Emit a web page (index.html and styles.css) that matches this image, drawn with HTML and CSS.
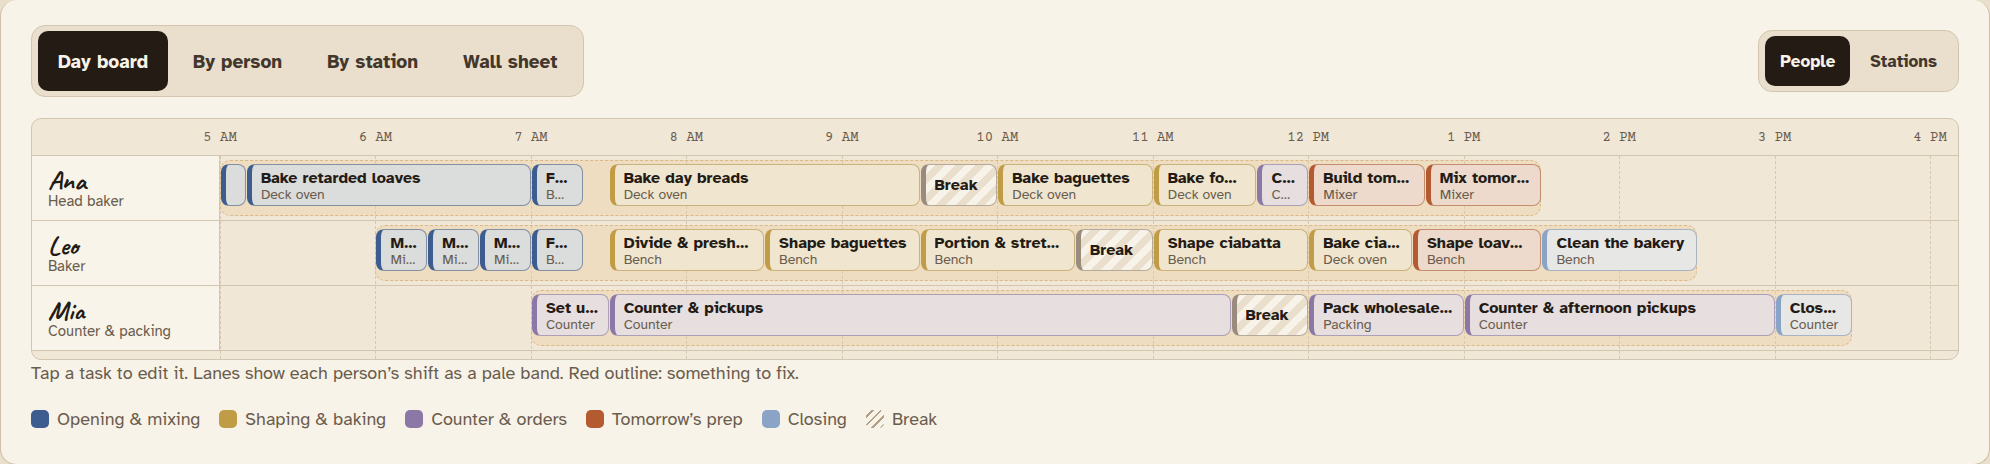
FILE: index.html
```
<!DOCTYPE html>
<html lang="en">
<head>
    <meta charset="UTF-8">
    <meta name="viewport" content="width=device-width, initial-scale=1.0">
    <title>Bakery Day Board</title>
    <link rel="stylesheet" href="styles.css">
</head>
<body>
    <main class="panel">
        <div class="toolbar">
            <div class="segmented views">
                <button class="seg active" type="button" aria-pressed="true">Day board</button>
                <button class="seg" type="button" aria-pressed="false">By person</button>
                <button class="seg" type="button" aria-pressed="false">By station</button>
                <button class="seg" type="button" aria-pressed="false">Wall sheet</button>
            </div>
            <div class="segmented grouping">
                <button class="seg active" type="button" aria-pressed="true">People</button>
                <button class="seg" type="button" aria-pressed="false">Stations</button>
            </div>
        </div>

        <div class="board">
            <div class="board-head">
                <div class="track">
                    <span class="hour" style="grid-column: 1">5 AM</span>
                    <span class="hour" style="grid-column: 13">6 AM</span>
                    <span class="hour" style="grid-column: 25">7 AM</span>
                    <span class="hour" style="grid-column: 37">8 AM</span>
                    <span class="hour" style="grid-column: 49">9 AM</span>
                    <span class="hour" style="grid-column: 61">10 AM</span>
                    <span class="hour" style="grid-column: 73">11 AM</span>
                    <span class="hour" style="grid-column: 85">12 PM</span>
                    <span class="hour" style="grid-column: 97">1 PM</span>
                    <span class="hour" style="grid-column: 109">2 PM</span>
                    <span class="hour" style="grid-column: 121">3 PM</span>
                    <span class="hour" style="grid-column: 133">4 PM</span>
                </div>
            </div>

            <div class="board-body">
                <div class="track gridlines">
                    <i style="grid-column: 1"></i>
                    <i style="grid-column: 13"></i>
                    <i style="grid-column: 25"></i>
                    <i style="grid-column: 37"></i>
                    <i style="grid-column: 49"></i>
                    <i style="grid-column: 61"></i>
                    <i style="grid-column: 73"></i>
                    <i style="grid-column: 85"></i>
                    <i style="grid-column: 97"></i>
                    <i style="grid-column: 109"></i>
                    <i style="grid-column: 121"></i>
                    <i style="grid-column: 133"></i>
                </div>

                <section class="row">
                    <div class="person">
                        <h2 class="name">Ana</h2>
                        <p class="role">Head baker</p>
                    </div>
                    <div class="track lane">
                        <div class="shift" style="grid-column: 1 / 103"></div>
                        <button class="task opening" type="button" style="grid-column: 1 / 3" aria-label="5:00 AM"></button>
                        <button class="task opening" type="button" style="grid-column: 3 / 25"><b>Bake retarded loaves</b><small>Deck oven</small></button>
                        <button class="task opening" type="button" style="grid-column: 25 / 29"><b>Feed starter</b><small>Bench</small></button>
                        <button class="task baking" type="button" style="grid-column: 31 / 55"><b>Bake day breads</b><small>Deck oven</small></button>
                        <button class="task break" type="button" style="grid-column: 55 / 61"><b>Break</b></button>
                        <button class="task baking" type="button" style="grid-column: 61 / 73"><b>Bake baguettes</b><small>Deck oven</small></button>
                        <button class="task baking" type="button" style="grid-column: 73 / 81"><b>Bake fo…</b><small>Deck oven</small></button>
                        <button class="task counter" type="button" style="grid-column: 81 / 85"><b>Check orders</b><small>Counter</small></button>
                        <button class="task prep" type="button" style="grid-column: 85 / 94"><b>Build tomorrow’s levain</b><small>Mixer</small></button>
                        <button class="task prep" type="button" style="grid-column: 94 / 103"><b>Mix tomorrow’s dough</b><small>Mixer</small></button>
                    </div>
                </section>

                <section class="row">
                    <div class="person">
                        <h2 class="name">Leo</h2>
                        <p class="role">Baker</p>
                    </div>
                    <div class="track lane">
                        <div class="shift" style="grid-column: 13 / 115"></div>
                        <button class="task opening" type="button" style="grid-column: 13 / 17"><b>Mix baguettes</b><small>Mixer</small></button>
                        <button class="task opening" type="button" style="grid-column: 17 / 21"><b>Mix focaccia</b><small>Mixer</small></button>
                        <button class="task opening" type="button" style="grid-column: 21 / 25"><b>Mix ciabatta</b><small>Mixer</small></button>
                        <button class="task opening" type="button" style="grid-column: 25 / 29"><b>Fold doughs</b><small>Bench</small></button>
                        <button class="task baking" type="button" style="grid-column: 31 / 43"><b>Divide &amp; preshape</b><small>Bench</small></button>
                        <button class="task baking" type="button" style="grid-column: 43 / 55"><b>Shape baguettes</b><small>Bench</small></button>
                        <button class="task baking" type="button" style="grid-column: 55 / 67"><b>Portion &amp; stretch focaccia</b><small>Bench</small></button>
                        <button class="task break" type="button" style="grid-column: 67 / 73"><b>Break</b></button>
                        <button class="task baking" type="button" style="grid-column: 73 / 85"><b>Shape ciabatta</b><small>Bench</small></button>
                        <button class="task baking" type="button" style="grid-column: 85 / 93"><b>Bake ciabatta</b><small>Deck oven</small></button>
                        <button class="task prep" type="button" style="grid-column: 93 / 103"><b>Shape loaves to retard</b><small>Bench</small></button>
                        <button class="task closing" type="button" style="grid-column: 103 / 115"><b>Clean the bakery</b><small>Bench</small></button>
                    </div>
                </section>

                <section class="row">
                    <div class="person">
                        <h2 class="name">Mia</h2>
                        <p class="role">Counter &amp; packing</p>
                    </div>
                    <div class="track lane">
                        <div class="shift" style="grid-column: 25 / 127"></div>
                        <button class="task counter" type="button" style="grid-column: 25 / 31"><b>Set up counter</b><small>Counter</small></button>
                        <button class="task counter" type="button" style="grid-column: 31 / 79"><b>Counter &amp; pickups</b><small>Counter</small></button>
                        <button class="task break" type="button" style="grid-column: 79 / 85"><b>Break</b></button>
                        <button class="task counter" type="button" style="grid-column: 85 / 97"><b>Pack wholesale orders</b><small>Packing</small></button>
                        <button class="task counter" type="button" style="grid-column: 97 / 121"><b>Counter &amp; afternoon pickups</b><small>Counter</small></button>
                        <button class="task closing" type="button" style="grid-column: 121 / 127"><b>Close counter</b><small>Counter</small></button>
                    </div>
                </section>
            </div>
        </div>

        <p class="hint">Tap a task to edit it. Lanes show each person’s shift as a pale band. Red outline: something to fix.</p>

        <ul class="legend">
            <li><span class="swatch opening"></span>Opening &amp; mixing</li>
            <li><span class="swatch baking"></span>Shaping &amp; baking</li>
            <li><span class="swatch counter"></span>Counter &amp; orders</li>
            <li><span class="swatch prep"></span>Tomorrow’s prep</li>
            <li><span class="swatch closing"></span>Closing</li>
            <li><span class="swatch break"></span>Break</li>
        </ul>
    </main>
</body>
</html>
```
FILE: styles.css
```
* {
    margin: 0;
    padding: 0;
    box-sizing: border-box;
}

:root {
    --ink: #241b15;
    --muted: #6b5d4e;
    --line: #d3c6b0;
    --paper: #f8f3e8;
    --sand: #e9dfcc;
}

body {
    font-family: "Atkinson Hyperlegible", "Noto Sans", sans-serif;
    font-size: 18px;
    line-height: 26px;
    color: var(--ink);
    background: #e9dfcc;
}

.panel {
    padding: 25px 30px 32px;
    background: var(--paper);
    border: 1px solid #cdbfa8;
    border-top: none;
    border-radius: 16px;
}

.toolbar {
    display: flex;
    justify-content: space-between;
    align-items: center;
    margin-bottom: 21px;
}

.segmented {
    display: flex;
    gap: 5px;
    padding: 5px 6px;
    background: var(--sand);
    border: 1px solid var(--line);
    border-radius: 14px;
}

.seg {
    border: none;
    border-radius: 10px;
    background: none;
    color: #43372c;
    font: inherit;
    font-weight: 700;
    cursor: pointer;
}

.seg.active {
    background: var(--ink);
    color: var(--paper);
}

.views .seg {
    height: 60px;
    padding: 2px 20px 0;
    font-size: 19px;
}

.grouping .seg {
    height: 50px;
    padding: 2px 15px 0;
    font-size: 17px;
}

.board {
    background: #f0e7d7;
    border: 1px solid var(--line);
    border-radius: 10px;
    overflow: hidden;
}

.board-head {
    padding-left: 188px;
    border-bottom: 1px solid var(--line);
}

/* one column per five minutes, 5:00 AM to 4:10 PM */
.track {
    display: grid;
    grid-template-columns: repeat(134, minmax(0, 1fr));
    grid-template-rows: 100%;
    padding-right: 2px;
}

.hour {
    grid-row: 1;
    display: flex;
    justify-content: center;
    width: 0;
    height: 36px;
    font-family: "Courier Prime", "Liberation Mono", monospace;
    font-size: 14px;
    line-height: 38px;
    color: var(--muted);
    white-space: nowrap;
}

.board-body {
    position: relative;
    padding-bottom: 8px;
}

.gridlines {
    position: absolute;
    inset: 0 0 0 188px;
}

.gridlines i {
    grid-row: 1;
    border-left: 1px dashed #d6c8b1;
}

.row {
    position: relative;
    display: grid;
    grid-template-columns: 188px 1fr;
    height: 65px;
    border-bottom: 1px solid var(--line);
}

.person {
    display: flex;
    flex-direction: column;
    justify-content: center;
    padding: 2px 0 0 16px;
    background: #f9f4e9;
    border-right: 1px solid var(--line);
}

.name {
    font-family: "Caveat", cursive;
    font-size: 27px;
    font-weight: 700;
    line-height: 24px;
}

.role {
    font-size: 15px;
    line-height: 18px;
    color: var(--muted);
}

.shift {
    grid-row: 1;
    margin: 4px 0;
    background: rgba(236, 202, 150, 0.35);
    border: 1px dashed #d9b98c;
    border-radius: 10px;
}

.task {
    grid-row: 1;
    display: flex;
    flex-direction: column;
    justify-content: center;
    min-width: 0;
    height: 42px;
    margin: 8px 0 0 1px;
    padding: 0 9px;
    border: 1px solid;
    border-left-width: 5px;
    border-radius: 8px;
    color: var(--ink);
    font: inherit;
    text-align: left;
    overflow: hidden;
    cursor: pointer;
}

.task b,
.task small {
    width: 100%;
    overflow: hidden;
    text-overflow: ellipsis;
    white-space: nowrap;
}

.task b {
    font-size: 16px;
    line-height: 18px;
}

.task small {
    padding-right: 1px;
    font-size: 14px;
    line-height: 15px;
    color: var(--muted);
}

.task.opening {
    background: #dbdcdc;
    border-color: #848fa1;
    border-left-color: #3d5c8f;
}

.task.baking {
    background: #f0e6d0;
    border-color: #c9b27c;
    border-left-color: #c19c47;
}

.task.counter {
    background: #e6dedf;
    border-color: #ad9fb5;
    border-left-color: #8b78a6;
}

.task.prep {
    background: #eddacd;
    border-color: #c48d70;
    border-left-color: #b35a30;
}

.task.closing {
    background: #e7e7e6;
    border-color: #a8b3c3;
    border-left-color: #8aa4c8;
}

.task.break {
    background: repeating-linear-gradient(135deg, #f8f3e8 0 7px, #e9dfcc 7px 14px);
    border-color: #b5a999;
    border-left-color: #998c7f;
}

.hint {
    line-height: 26px;
    color: var(--muted);
}

.legend {
    display: flex;
    flex-wrap: wrap;
    gap: 8px 19px;
    margin-top: 20px;
    list-style: none;
    color: var(--muted);
}

.legend li {
    display: flex;
    align-items: center;
    gap: 8px;
}

.swatch {
    width: 18px;
    height: 18px;
    border-radius: 5px;
}

.swatch.opening {
    background: #3d5c8f;
}

.swatch.baking {
    background: #c19c47;
}

.swatch.counter {
    background: #8b78a6;
}

.swatch.prep {
    background: #b35a30;
}

.swatch.closing {
    background: #8aa4c8;
}

.swatch.break {
    background: repeating-linear-gradient(135deg, transparent 0 4px, #b3a083 4px 6px);
}
```
